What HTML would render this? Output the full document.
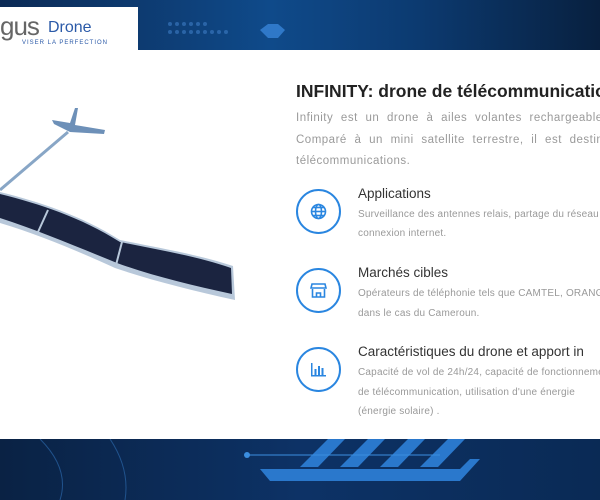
<!DOCTYPE html><html><head><style>
html,body{margin:0;width:600px;height:500px;overflow:hidden;background:#fff}
#w{position:relative;width:600px;height:500px;overflow:hidden;font-family:"Liberation Sans",sans-serif}
.top{position:absolute;left:0;top:0;width:600px;height:50px;background:linear-gradient(90deg,#0b2a55,#0f4a8a 45%,#0c3a70 70%,#08203f)}
.bot{position:absolute;left:0;top:439px;width:600px;height:61px;background:linear-gradient(90deg,#0a2244,#0d3266 50%,#0a2a55)}
.logo{position:absolute;left:0;top:7px;width:138px;height:43px;background:#fff}
.t{position:absolute;white-space:nowrap}
h1{position:absolute;left:296px;top:81px;margin:0;font-size:17.5px;color:#222;white-space:nowrap;font-weight:bold}
.p{left:296px;font-size:11.5px;color:#9a9a9a;letter-spacing:.5px;word-spacing:4px}
.c{position:absolute;left:296px;width:45px;height:45px;border:2px solid #2a86e0;border-radius:50%;box-sizing:border-box}
.c svg{position:absolute;left:12px;top:12px}
.h{left:358px;font-size:13.5px;color:#333}
.s{left:358px;font-size:10px;color:#999;letter-spacing:.2px}
</style></head><body><div id="w">
<div class="top">
<svg width="600" height="50"><g fill="#3d7cc4" opacity=".6"><circle cx="170" cy="24" r="2"/><circle cx="177" cy="24" r="2"/><circle cx="184" cy="24" r="2"/><circle cx="191" cy="24" r="2"/><circle cx="198" cy="24" r="2"/><circle cx="205" cy="24" r="2"/><circle cx="170" cy="32" r="2"/><circle cx="177" cy="32" r="2"/><circle cx="184" cy="32" r="2"/><circle cx="191" cy="32" r="2"/><circle cx="198" cy="32" r="2"/><circle cx="205" cy="32" r="2"/><circle cx="212" cy="32" r="2"/><circle cx="219" cy="32" r="2"/><circle cx="226" cy="32" r="2"/></g><polygon points="260,30 268,24 278,24 285,30 278,38 268,38" fill="#2f78c8"/></svg>
</div>
<div class="logo"><span class="t" style="left:0;top:4px;font-size:26px;color:#666;letter-spacing:-1px">gus</span><span class="t" style="left:48px;top:12px;font-size:16px;color:#2b5aa8">Drone</span><span class="t" style="left:22px;top:33px;font-size:6px;color:#2b5aa8;letter-spacing:1px">VISER LA PERFECTION</span></div>
<div class="bot"><svg width="600" height="61"><g fill="#2a78cc"><polygon points="300,28 318,28 345,0 328,0"/><polygon points="340,28 358,28 385,0 368,0"/><polygon points="380,28 398,28 425,0 408,0"/><polygon points="420,28 438,28 465,0 448,0"/><polygon points="260,30 460,30 470,20 480,20 460,42 270,42"/></g><circle cx="247" cy="16" r="3" fill="#3b8ee0"/><line x1="247" y1="16" x2="440" y2="16" stroke="#3b8ee0"/><g stroke="#2a66a8" fill="none" opacity=".7"><path d="M40 0 Q70 30 60 61"/><path d="M110 0 Q130 30 125 61"/></g></svg></div>
<svg class="t" style="left:0;top:90px" width="280" height="215">
<polygon points="52,30 70,33 75,18 78,18 75,35 105,40 104,44 70,42 54,34" fill="#6d90b8"/>
<line x1="68" y1="42" x2="0" y2="100" stroke="#88a6c6" stroke-width="3"/>
<path d="M0,102 C40,112 80,125 120,150 C160,158 200,165 233,176 L235,210 C190,200 150,190 115,178 C80,162 40,145 0,133 Z" fill="#b8c8da"/>
<path d="M0,104 C40,114 80,127 120,152 C160,160 200,167 231,178 L232,204 C190,195 150,185 117,173 C80,158 40,141 0,128 Z" fill="#1b2440"/>
<line x1="48" y1="120" x2="38" y2="142" stroke="#b8c8da" stroke-width="2"/><line x1="122" y1="152" x2="116" y2="175" stroke="#b8c8da" stroke-width="2"/>
</svg>
<h1>INFINITY: drone de télécommunications</h1>
<div class="t p" style="top:112px">Infinity est un drone à ailes volantes rechargeable par</div>
<div class="t p" style="top:134px">Comparé à un mini satellite terrestre, il est destiné aux</div>
<div class="t p" style="top:155px">télécommunications.</div>
<div class="c" style="top:189px"><svg width="17" height="17" viewBox="0 0 17 17" fill="none" stroke="#2a86e0" stroke-width="1.6"><circle cx="8.5" cy="8.5" r="7"/><ellipse cx="8.5" cy="8.5" rx="3" ry="7"/><line x1="1.5" y1="8.5" x2="15.5" y2="8.5"/><line x1="3" y1="4.5" x2="14" y2="4.5"/><line x1="3" y1="12.5" x2="14" y2="12.5"/></svg></div>
<div class="t h" style="top:186px">Applications</div>
<div class="t s" style="top:209px">Surveillance des antennes relais, partage du réseau</div>
<div class="t s" style="top:228px">connexion internet.</div>
<div class="c" style="top:268px"><svg width="17" height="17" viewBox="0 0 17 17" fill="none" stroke="#2a86e0" stroke-width="1.6"><path d="M2 2h13l1 4H1z"/><path d="M2.5 7v8h12V7"/><path d="M6.5 15v-4h4v4"/></svg></div>
<div class="t h" style="top:265px">Marchés cibles</div>
<div class="t s" style="top:288px">Opérateurs de téléphonie tels que CAMTEL, ORANGE</div>
<div class="t s" style="top:308px">dans le cas du Cameroun.</div>
<div class="c" style="top:347px"><svg width="17" height="17" viewBox="0 0 17 17" fill="#2a86e0"><rect x="1" y="2" width="1.5" height="13"/><rect x="1" y="14" width="15" height="1.5"/><rect x="4.5" y="8" width="2" height="6"/><rect x="8" y="5" width="2" height="9"/><rect x="11.5" y="7" width="2" height="7"/></svg></div>
<div class="t h" style="top:344px">Caractéristiques du drone et apport in</div>
<div class="t s" style="top:367px">Capacité de vol de 24h/24, capacité de fonctionnement</div>
<div class="t s" style="top:387px">de télécommunication, utilisation d'une énergie</div>
<div class="t s" style="top:406px">(énergie solaire) .</div>
</div></body></html>
